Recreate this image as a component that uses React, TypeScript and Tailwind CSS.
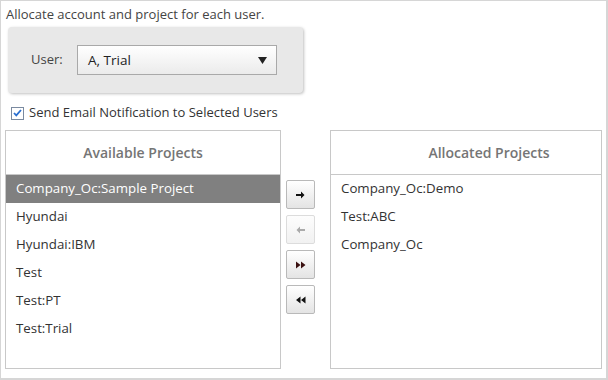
import React from "react";

const font = { fontFamily: '"Open Sans", "Noto Sans", sans-serif' };

function ArrowRight({ color = "#111" }: { color?: string }) {
  return (
    <svg width="9" height="8" viewBox="0 0 9 8">
      <path d="M0 3h5V0.5L8.5 4 5 7.5V5H0z" fill={color} />
    </svg>
  );
}
function ArrowLeft({ color = "#111" }: { color?: string }) {
  return (
    <svg width="9" height="8" viewBox="0 0 9 8">
      <path d="M9 3H4V0.5L0.5 4 4 7.5V5H9z" fill={color} />
    </svg>
  );
}
function DoubleRight() {
  return (
    <svg width="10" height="8" viewBox="0 0 10 8">
      <path d="M0 0.5L4.5 4 0 7.5z M5 0.5L9.5 4 5 7.5z" fill="#3a1010" />
    </svg>
  );
}
function DoubleLeft() {
  return (
    <svg width="10" height="8" viewBox="0 0 10 8">
      <path d="M4.5 0.5L0 4 4.5 7.5z M9.5 0.5L5 4 9.5 7.5z" fill="#111" />
    </svg>
  );
}

function Btn({ children, disabled }: { children: React.ReactNode; disabled?: boolean }) {
  return (
    <div
      className={
        "w-[29px] h-[29px] flex items-center justify-center rounded-[2px] border " +
        (disabled
          ? "border-[#dcdcdc] bg-gradient-to-b from-[#fdfdfd] to-[#f1f1f1]"
          : "border-[#b9b9b9] bg-gradient-to-b from-[#ffffff] to-[#e4e4e4]")
      }
    >
      {children}
    </div>
  );
}

export default function App() {
  const available = [
    "Company_Oc:Sample Project",
    "Hyundai",
    "Hyundai:IBM",
    "Test",
    "Test:PT",
    "Test:Trial",
  ];
  const allocated = ["Company_Oc:Demo", "Test:ABC", "Company_Oc"];
  return (
    <div
      className="w-[608px] h-[380px] bg-white border-t border-l border-b-2 border-r-2 border-[#d6d6d6] text-[#333] text-[13px] overflow-hidden"
      style={font}
    >
      <div className="pl-[5px] pt-[4px] leading-[18px] text-[#444]">
        Allocate account and project for each user.
      </div>
      <div className="ml-[7px] mt-[4px] w-[295px] h-[66px] rounded-[4px] bg-[#e8e8e8] shadow-[1px_1px_3px_rgba(0,0,0,0.25)] flex items-center">
        <div className="pl-[23px] w-[69px] text-[#444]">User:</div>
        <div className="w-[200px] h-[30px] border border-[#a9a9a9] bg-gradient-to-b from-[#ffffff] to-[#ebebeb] flex items-center pl-[10px] pr-[9px]">
          <span className="flex-1 text-[#222] text-[13.5px]">A, Trial</span>
          <svg width="9" height="7" viewBox="0 0 9 7">
            <path d="M0 0h9L4.5 7z" fill="#222" />
          </svg>
        </div>
      </div>
      <div className="flex items-center mt-[12px] pl-[10px] h-[16px]">
        <div className="w-[13px] h-[13px] border border-[#7a8aa0] bg-white flex items-center justify-center">
          <svg width="9" height="8" viewBox="0 0 9 8">
            <path d="M1 4l2.3 2.4L8 1" stroke="#2a6fd0" strokeWidth="1.8" fill="none" />
          </svg>
        </div>
        <span className="ml-[5px] text-[#333]">Send Email Notification to Selected Users</span>
      </div>
      <div className="flex mt-[9px] pl-[4px] h-[239px]">
        <div className="w-[276px] border border-[#c8c8c8] flex flex-col">
          <div className="h-[44px] border-b border-[#c8c8c8] flex items-center justify-center text-[#757575] text-[14px] font-semibold">
            Available Projects
          </div>
          {available.map((p, i) => (
            <div
              key={p}
              className={
                "h-[28px] flex items-center pl-[10px] text-[13.3px] " +
                (i === 0 ? "bg-[#808080] text-white" : "text-[#333]")
              }
            >
              {p}
            </div>
          ))}
        </div>
        <div className="w-[49px] flex flex-col items-start pl-[5px] pt-[50px] gap-[6px]">
          <Btn>
            <ArrowRight />
          </Btn>
          <Btn disabled>
            <ArrowLeft color="#aaa" />
          </Btn>
          <Btn>
            <DoubleRight />
          </Btn>
          <Btn>
            <DoubleLeft />
          </Btn>
        </div>
        <div className="w-[272px] border border-[#c8c8c8] flex flex-col">
          <div className="h-[44px] border-b border-[#c8c8c8] flex items-center justify-center pl-[46px] text-[#757575] text-[14px] font-semibold">
            Allocated Projects
          </div>
          {allocated.map((p) => (
            <div key={p} className="h-[28px] flex items-center pl-[10px] text-[13.3px] text-[#333]">
              {p}
            </div>
          ))}
        </div>
      </div>
    </div>
  );
}
